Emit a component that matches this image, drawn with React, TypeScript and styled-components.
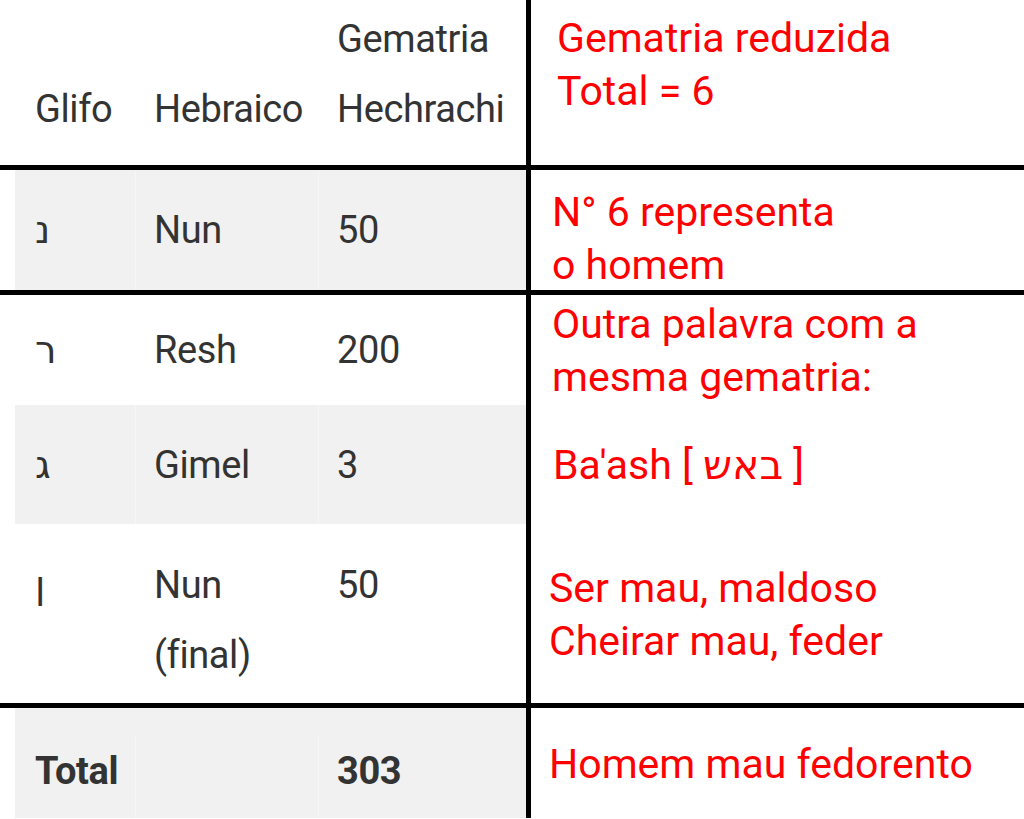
import styled, { createGlobalStyle } from 'styled-components';

const GlobalStyle = createGlobalStyle`
  html, body {
    margin: 0;
    padding: 0;
    background: #fff;
  }
  body {
    font-family: Roboto, "DejaVu Sans", sans-serif;
    overflow: hidden;
  }
`;

const Page = styled.div`
  width: 1024px;
  height: 819px;
  overflow: hidden;
  background: #fff;
`;

const Band = styled.section<{ $h: number; $last?: boolean }>`
  display: flex;
  height: ${(p) => p.$h}px;
  border-bottom: ${(p) => (p.$last ? 'none' : '5px solid #000')};
`;

const Left = styled.div`
  width: 511px;
  padding-left: 15px;
  border-right: 5px solid #000;
  display: flex;
  flex-direction: column;
`;

const Row = styled.div<{ $h?: number; $gray?: boolean; $align?: string; $pad?: number }>`
  display: grid;
  grid-template-columns: 120px 183px 1fr;
  height: ${(p) => (p.$h ? `${p.$h}px` : 'auto')};
  flex: ${(p) => (p.$h ? 'none' : '1')};
  background: ${(p) => (p.$gray ? '#f1f1f1' : '#fff')};
  padding-top: ${(p) => p.$pad || 0}px;
  padding-bottom: ${(p) => (p.$align === 'end' ? 21 : 0)}px;
  box-sizing: border-box;
`;

const Cell = styled.div<{ $gray?: boolean; $bold?: boolean }>`
  padding-left: 18px;
  font-size: 38px;
  letter-spacing: -0.4px;
  line-height: 70px;
  color: #333;
  font-weight: ${(p) => (p.$bold ? 700 : 400)};
  display: flex;
  flex-direction: column;
  border-left: 1px solid ${(p) => (p.$gray ? '#f6f6f6' : 'transparent')};

  &:first-child {
    border-left: none;
    padding-left: 20px;
  }
`;

const CellText = styled.div<{ $v: string }>`
  margin-top: ${(p) => (p.$v === 'start' ? '0' : 'auto')};
  margin-bottom: ${(p) => (p.$v === 'center' ? 'auto' : '0')};
`;

const Glyph = styled.span`
  font-family: "DejaVu Sans", sans-serif;
  font-size: 38px;
  color: #333;
`;

const Right = styled.div<{ $pt: number; $pl: number }>`
  flex: 1;
  padding: ${(p) => p.$pt}px 0 0 ${(p) => p.$pl}px;
  color: #ff0000;
  font-size: 41px;
  line-height: 53px;
`;

const Note = styled.div<{ $mt?: number; $pl?: number }>`
  margin-top: ${(p) => p.$mt || 0}px;
  margin-left: ${(p) => p.$pl || 0}px;
  white-space: nowrap;
`;

type RowData = {
  cells: React.ReactNode[];
  h?: number;
  gray?: boolean;
  align?: string;
  pad?: number;
  bold?: boolean;
};

function TableRow({ cells, h, gray, align = 'center', pad, bold }: RowData) {
  return (
    <Row $h={h} $gray={gray} $align={align} $pad={pad}>
      {cells.map((c, i) => (
        <Cell key={i} $gray={gray} $bold={bold}>
          <CellText $v={align}>{c}</CellText>
        </Cell>
      ))}
    </Row>
  );
}

export default function App() {
  return (
    <Page>
      <GlobalStyle />
      <Band $h={165}>
        <Left>
          <TableRow
            h={165}
            align="end"
            cells={['Glifo', 'Hebraico', <>Gematria<br />Hechrachi</>]}
          />
        </Left>
        <Right $pt={12} $pl={26}>
          <Note>Gematria reduzida</Note>
          <Note>Total = 6</Note>
        </Right>
      </Band>

      <Band $h={120}>
        <Left>
          <TableRow h={120} gray cells={[<Glyph>נ</Glyph>, 'Nun', '50']} />
        </Left>
        <Right $pt={16} $pl={21}>
          <Note>N° 6 representa</Note>
          <Note>o homem</Note>
        </Right>
      </Band>

      <Band $h={408}>
        <Left>
          <TableRow h={110} cells={[<Glyph>ר</Glyph>, 'Resh', '200']} />
          <TableRow h={119} gray cells={[<Glyph>ג</Glyph>, 'Gimel', '3']} />
          <TableRow
            align="start"
            pad={26}
            cells={[<Glyph>ן</Glyph>, <>Nun<br />(final)</>, '50']}
          />
        </Left>
        <Right $pt={3} $pl={21}>
          <Note>Outra palavra com a</Note>
          <Note>mesma gematria:</Note>
          <Note $mt={35} $pl={1}>Ba'ash [ באש ]</Note>
          <Note $mt={70} $pl={-3}>Ser mau, maldoso</Note>
          <Note $pl={-3}>Cheirar mau, feder</Note>
        </Right>
      </Band>

      <Band $h={110} $last>
        <Left>
          <TableRow h={110} gray align="start" pad={28} bold cells={['Total', '', '303']} />
        </Left>
        <Right $pt={30} $pl={18}>
          <Note>Homem mau fedorento</Note>
        </Right>
      </Band>
    </Page>
  );
}
